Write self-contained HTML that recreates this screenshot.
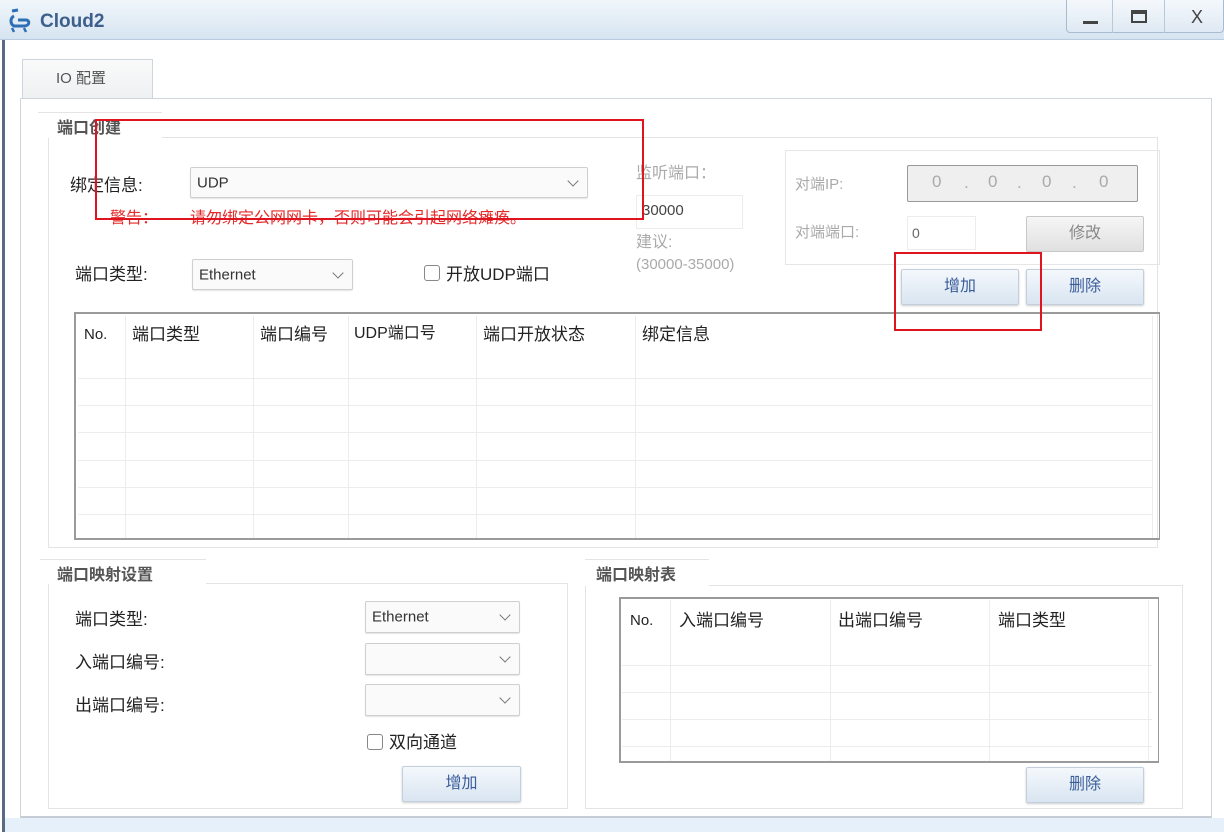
<!DOCTYPE html>
<html><head><meta charset="utf-8"><style>
*{margin:0;padding:0;box-sizing:border-box}
body{width:1224px;height:832px;position:relative;background:#fff;overflow:hidden;font-family:"Liberation Sans","Noto Sans CJK SC",sans-serif;font-size:16px;color:#222}
.a{position:absolute}
.t{position:absolute;white-space:nowrap;line-height:1}
.box{position:absolute;border:1px solid #dcdcdc}
.sel{position:absolute;border:1px solid #cfcfcf;border-radius:2px;background:#fafafa;box-shadow:0 1px 1px #e4e4e4}
.sel span{position:absolute;left:6px;top:50%;transform:translateY(-50%);font-size:15px;color:#333}
.chev{position:absolute;right:10px;top:50%;width:8px;height:8px;border-right:1.5px solid #777;border-bottom:1.5px solid #777;transform:translateY(-75%) rotate(45deg)}
.btn{position:absolute;border:1px solid #c3cfdc;border-radius:2px;background:linear-gradient(#f4f8fc,#d9e5f1);color:#3a5d9a;font-size:16px;text-align:center;box-shadow:0 1px 2px #ccc}
.gbtn{position:absolute;border:1px solid #c8c8c8;border-radius:2px;background:linear-gradient(#f6f6f6,#e0e0e0);color:#888;font-size:16px;text-align:center}
.red{position:absolute;border:2px solid #e0141e}
.hl{position:absolute;height:1px;background:#ececec}
.vl{position:absolute;width:1px;background:#ececec}
.cb{position:absolute;width:16px;height:16px;border:1.5px solid #888;border-radius:3px;background:#fff}
.gt{color:#aaa}
</style></head><body>
<div class="a" style="left:0;top:0;width:1224px;height:40px;background:linear-gradient(#f1f6fb,#d6e4f1);border-bottom:1px solid #b9cbe0"></div>
<svg class="a" style="left:8px;top:8px" width="26" height="26" viewBox="0 0 26 26"><path d="M4 3 L10 2 M6 8 C2 10 2 16 6 18 L16 18 C22 18 22 12 18 12 L10 12" stroke="#2d6fb5" stroke-width="3" fill="none"/><path d="M4 20 L6 24 M16 20 L18 24" stroke="#2d6fb5" stroke-width="2.5"/></svg>
<div class="t" style="left:40px;top:12px;font-size:19px;color:#3d5f8c;font-weight:bold">Cloud2</div>
<div class="a" style="left:1066px;top:0;width:158px;height:33px;border:1px solid #a9bbd0;border-top:none;border-radius:0 0 4px 4px;background:linear-gradient(#f4f8fc,#dfe9f3)"></div>
<div class="a" style="left:1112px;top:0;width:1px;height:33px;background:#b9c8d8"></div>
<div class="a" style="left:1164px;top:0;width:1px;height:33px;background:#b9c8d8"></div>
<div class="a" style="left:1083px;top:21px;width:15px;height:3px;background:#444"></div>
<div class="a" style="left:1131px;top:10px;width:16px;height:13px;border:2px solid #444;border-top-width:4px"></div>
<div class="t" style="left:1191px;top:8px;font-size:18px;color:#444">X</div>
<div class="a" style="left:2px;top:40px;width:3px;height:792px;background:#5a6a80"></div>
<div class="a" style="left:5px;top:818px;width:1219px;height:14px;background:#e6f0fb"></div>
<div class="a" style="left:22px;top:59px;width:131px;height:40px;border:1px solid #cfd5dc;border-bottom:none;background:linear-gradient(#fafafa,#eef0f2)"></div>
<div class="t" style="left:56px;top:71px;font-size:15px;color:#555">IO 配置</div>
<div class="a" style="left:20px;top:98px;width:1192px;height:720px;border:1px solid #cfd5dc;border-bottom:2px solid #c5ccd4"></div>
<div class="box" style="left:48px;top:137px;width:1110px;height:411px;border-color:#e4e4e4"></div>
<div class="a" style="left:38px;top:112px;width:124px;height:26px;background:#fff;border-top:1px solid #e4e4e4"></div>
<div class="t" style="left:57px;top:121px;font-size:16px;color:#555;font-weight:bold">端口创建</div>
<div class="t" style="left:70px;top:177px;font-size:17px">绑定信息:</div>
<div class="sel" style="left:190px;top:167px;width:398px;height:31px"><span>UDP</span><i class="chev"></i></div>
<div class="t" style="left:110px;top:211px;font-size:16px;color:#e52a2a">警告：</div>
<div class="t" style="left:190px;top:211px;font-size:16px;color:#e52a2a">请勿绑定公网网卡，否则可能会引起网络瘫痪。</div>
<div class="t" style="left:75px;top:266px;font-size:17px">端口类型:</div>
<div class="sel" style="left:192px;top:259px;width:161px;height:31px"><span>Ethernet</span><i class="chev"></i></div>
<div class="cb" style="left:424px;top:265px"></div>
<div class="t" style="left:446px;top:266px;font-size:17px">开放UDP端口</div>
<div class="t gt" style="left:636px;top:166px;font-size:16px">监听端口：</div>
<div class="box" style="left:636px;top:195px;width:107px;height:34px;border-color:#ececec"></div>
<div class="t" style="left:642px;top:203px;font-size:15px;color:#444">30000</div>
<div class="t gt" style="left:636px;top:235px;font-size:16px">建议:</div>
<div class="t gt" style="left:636px;top:257px;font-size:15px">(30000-35000)</div>
<div class="box" style="left:785px;top:150px;width:375px;height:115px;border-color:#e6e6e6"></div>
<div class="t gt" style="left:795px;top:177px;font-size:15px">对端IP:</div>
<div class="a" style="left:907px;top:165px;width:231px;height:37px;border:1px solid #999;border-radius:2px;background:#efefef"></div>
<div class="t gt" style="left:932px;top:173px;font-size:17px">0</div>
<div class="t gt" style="left:964px;top:174px;font-size:17px">.</div>
<div class="t gt" style="left:988px;top:173px;font-size:17px">0</div>
<div class="t gt" style="left:1017px;top:174px;font-size:17px">.</div>
<div class="t gt" style="left:1042px;top:173px;font-size:17px">0</div>
<div class="t gt" style="left:1072px;top:174px;font-size:17px">.</div>
<div class="t gt" style="left:1099px;top:173px;font-size:17px">0</div>
<div class="t gt" style="left:795px;top:225px;font-size:15px">对端端口:</div>
<div class="box" style="left:907px;top:216px;width:69px;height:34px;border-color:#ececec"></div>
<div class="t" style="left:912px;top:226px;font-size:14px;color:#666">0</div>
<div class="gbtn" style="left:1026px;top:216px;width:118px;height:36px;line-height:34px">修改</div>
<div class="btn" style="left:901px;top:269px;width:118px;height:36px;line-height:34px">增加</div>
<div class="btn" style="left:1026px;top:269px;width:118px;height:36px;line-height:34px">删除</div>
<div class="a" style="left:74px;top:312px;width:1086px;height:228px;border:2px solid #9a9a9a;border-right-width:1px"></div>
<div class="hl" style="left:78px;top:378px;width:1075px"></div>
<div class="hl" style="left:78px;top:405px;width:1075px"></div>
<div class="hl" style="left:78px;top:432px;width:1075px"></div>
<div class="hl" style="left:78px;top:460px;width:1075px"></div>
<div class="hl" style="left:78px;top:487px;width:1075px"></div>
<div class="hl" style="left:78px;top:514px;width:1075px"></div>
<div class="vl" style="left:125px;top:316px;height:222px"></div>
<div class="vl" style="left:253px;top:316px;height:222px"></div>
<div class="vl" style="left:348px;top:316px;height:222px"></div>
<div class="vl" style="left:476px;top:316px;height:222px"></div>
<div class="vl" style="left:635px;top:316px;height:222px"></div>
<div class="vl" style="left:1152px;top:316px;height:222px"></div>
<div class="t" style="left:84px;top:327px;font-size:15px">No.</div>
<div class="t" style="left:132px;top:326px;font-size:17px">端口类型</div>
<div class="t" style="left:260px;top:326px;font-size:17px">端口编号</div>
<div class="t" style="left:354px;top:326px;font-size:16px">UDP端口号</div>
<div class="t" style="left:483px;top:326px;font-size:17px">端口开放状态</div>
<div class="t" style="left:642px;top:326px;font-size:17px">绑定信息</div>
<div class="red" style="left:95px;top:119px;width:549px;height:101px"></div>
<div class="red" style="left:894px;top:252px;width:148px;height:79px"></div>
<div class="box" style="left:48px;top:583px;width:520px;height:226px;border-color:#e4e4e4"></div>
<div class="a" style="left:40px;top:559px;width:166px;height:25px;background:#fff;border-top:1px solid #e4e4e4"></div>
<div class="t" style="left:57px;top:568px;font-size:16px;color:#555;font-weight:bold">端口映射设置</div>
<div class="t" style="left:75px;top:611px;font-size:17px">端口类型:</div>
<div class="t" style="left:75px;top:654px;font-size:17px">入端口编号:</div>
<div class="t" style="left:75px;top:697px;font-size:17px">出端口编号:</div>
<div class="sel" style="left:365px;top:601px;width:155px;height:32px"><span>Ethernet</span><i class="chev"></i></div>
<div class="sel" style="left:365px;top:643px;width:155px;height:32px"><i class="chev"></i></div>
<div class="sel" style="left:365px;top:684px;width:155px;height:32px"><i class="chev"></i></div>
<div class="cb" style="left:367px;top:734px"></div>
<div class="t" style="left:389px;top:734px;font-size:17px">双向通道</div>
<div class="btn" style="left:402px;top:766px;width:119px;height:36px;line-height:34px">增加</div>
<div class="box" style="left:585px;top:585px;width:598px;height:224px;border-color:#e4e4e4"></div>
<div class="a" style="left:585px;top:559px;width:124px;height:27px;background:#fff;border-top:1px solid #e4e4e4"></div>
<div class="t" style="left:596px;top:568px;font-size:16px;color:#555;font-weight:bold">端口映射表</div>
<div class="a" style="left:619px;top:597px;width:540px;height:166px;border:2px solid #9a9a9a;border-right-width:1px"></div>
<div class="hl" style="left:622px;top:665px;width:530px"></div>
<div class="hl" style="left:622px;top:692px;width:530px"></div>
<div class="hl" style="left:622px;top:719px;width:530px"></div>
<div class="hl" style="left:622px;top:746px;width:530px"></div>
<div class="vl" style="left:670px;top:600px;height:161px"></div>
<div class="vl" style="left:830px;top:600px;height:161px"></div>
<div class="vl" style="left:989px;top:600px;height:161px"></div>
<div class="vl" style="left:1148px;top:600px;height:161px"></div>
<div class="t" style="left:630px;top:613px;font-size:15px">No.</div>
<div class="t" style="left:679px;top:612px;font-size:17px">入端口编号</div>
<div class="t" style="left:838px;top:612px;font-size:17px">出端口编号</div>
<div class="t" style="left:998px;top:612px;font-size:17px">端口类型</div>
<div class="btn" style="left:1026px;top:767px;width:118px;height:36px;line-height:34px">删除</div>
</body></html>
